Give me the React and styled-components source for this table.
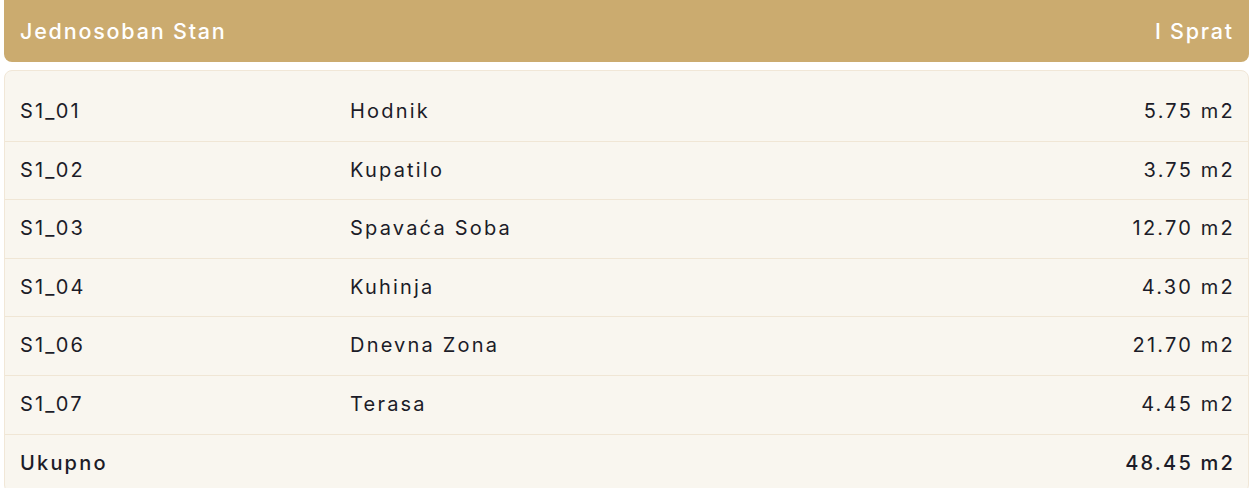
import React from 'react'
import styled, { createGlobalStyle } from 'styled-components'

const GlobalStyle = createGlobalStyle`
  body {
    margin: 0;
    background: #ffffff;
    font-family: Inter, "Noto Sans", sans-serif;
    color: #1c1c28;
  }
`

const rooms = [
  { code: 'S1_01', name: 'Hodnik', area: '5.75' },
  { code: 'S1_02', name: 'Kupatilo', area: '3.75' },
  { code: 'S1_03', name: 'Spavaća Soba', area: '12.70' },
  { code: 'S1_04', name: 'Kuhinja', area: '4.30' },
  { code: 'S1_06', name: 'Dnevna Zona', area: '21.70' },
  { code: 'S1_07', name: 'Terasa', area: '4.45' },
]

function App() {
  return (
    <Wrapper>
      <GlobalStyle />
      <Header>
        <span>Jednosoban Stan</span>
        <span>I Sprat</span>
      </Header>
      <Panel>
        {rooms.map(r => (
          <Row key={r.code}>
            <Cell>{r.code}</Cell>
            <Cell>{r.name}</Cell>
            <Cell $right>{r.area} m2</Cell>
          </Row>
        ))}
        <Row $total>
          <Cell>Ukupno</Cell>
          <Cell />
          <Cell $right>48.45 m2</Cell>
        </Row>
      </Panel>
    </Wrapper>
  )
}

const Wrapper = styled.div`
  padding: 0 3px 0 4px;
`

const Header = styled.div`
  height: 62px;
  background: #cbab6f;
  border-radius: 0 0 8px 8px;
  display: flex;
  align-items: center;
  justify-content: space-between;
  padding: 0 15px 0 16px;
  color: #ffffff;
  font-size: 21.5px;
  font-weight: 500;
  letter-spacing: 1.8px;
`

const Panel = styled.div`
  margin-top: 8px;
  background: #f9f6ef;
  border: 1px solid #f1e7d7;
  border-radius: 8px;
  padding-top: 12px;
`

const Row = styled.div`
  display: grid;
  grid-template-columns: 330px 1fr auto;
  align-items: center;
  padding: 18px 15px;
  line-height: 21.6px;
  font-size: 20px;
  letter-spacing: 2.2px;
  font-weight: ${p => (p.$total ? 500 : 400)};
  border-bottom: ${p => (p.$total ? 'none' : '1px solid #f0e6d5')};
`

const Cell = styled.div`
  text-align: ${p => (p.$right ? 'right' : 'left')};
  white-space: nowrap;
  margin-right: ${p => (p.$right ? '-2px' : '0')};
`

export default App
